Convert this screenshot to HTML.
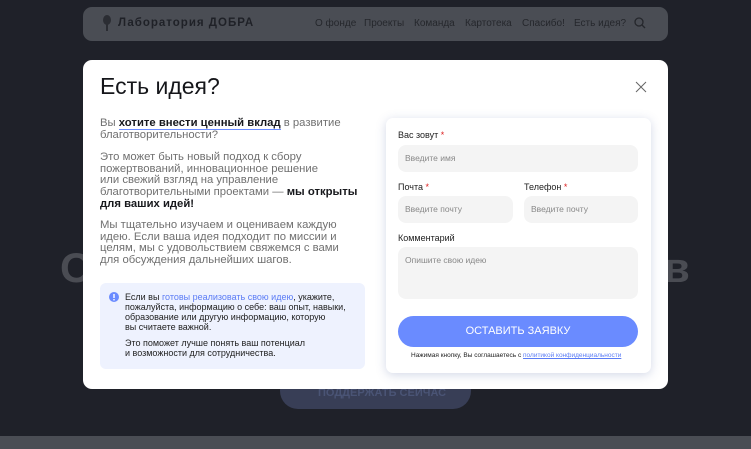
<!DOCTYPE html>
<html><head><meta charset="utf-8"><style>
*{margin:0;padding:0;box-sizing:border-box}
body{width:751px;height:449px;overflow:hidden;background:#1f2129;font-family:"Liberation Sans","Noto Sans CJK SC",sans-serif;position:relative}
.abs{position:absolute}
.hdr{left:83px;top:7px;width:585px;height:34px;background:#4a4d54;border-radius:9px}
.logo{left:118px;top:17px;font-size:11.5px;font-weight:bold;color:#1f2127;letter-spacing:1px}
.nav{top:18px;font-size:10px;color:#25272c}
.big{font-size:42px;font-weight:bold;color:#4a4c53}
.bgbtn{left:280px;top:372px;width:191px;height:37px;background:#383e56;border-radius:18px;color:#4a5475;font-size:11px;padding:15px 0 0 38px;font-weight:bold}
.band{left:0;top:436px;width:751px;height:13px;background:#4a4d54}
.modal{left:83px;top:60px;width:585px;height:329px;background:#fff;border-radius:9px}
h1{position:absolute;left:100px;top:73px;font-size:23px;font-weight:normal;color:#15161a}
.p{position:absolute;left:100px;width:290px;font-size:11.3px;line-height:11.7px;color:#707070;white-space:nowrap}
.p b{color:#17181c}
.info{left:100px;top:283px;width:265px;height:86px;background:#eef2fe;border-radius:6px}
.it{position:absolute;left:125px;font-size:9px;line-height:10px;color:#222;white-space:nowrap}
.card{left:386px;top:118px;width:265px;height:255px;background:#fff;border-radius:7px;box-shadow:0 2px 10px rgba(80,100,160,.25)}
.lb{position:absolute;font-size:9px;color:#222}
.lb i{color:#d22;font-style:normal}
.in{position:absolute;background:#f4f4f4;border-radius:8px;font-size:8.5px;color:#888;padding-left:7px}
.btn{left:398px;top:316px;width:240px;height:31px;background:#6a8bff;border-radius:16px;color:#fff;font-size:11px;text-align:center;line-height:31px}
</style></head><body>
<div class="abs hdr"></div>
<svg class="abs" style="left:102px;top:14px" width="10" height="18" viewBox="0 0 10 18"><ellipse cx="5" cy="6" rx="4" ry="5" fill="#2b2d33"/><rect x="4" y="10" width="2" height="7" fill="#2b2d33"/></svg>
<div class="abs logo">Лаборатория ДОБРА</div>
<div class="abs nav" style="left:315px">О фонде</div>
<div class="abs nav" style="left:364px">Проекты</div>
<div class="abs nav" style="left:414px">Команда</div>
<div class="abs nav" style="left:465px">Картотека</div>
<div class="abs nav" style="left:522px">Спасибо!</div>
<div class="abs nav" style="left:574px">Есть идея?</div>
<svg class="abs" style="left:634px;top:17px" width="12" height="12" viewBox="0 0 12 12"><circle cx="5" cy="5" r="4" stroke="#25272c" stroke-width="1.3" fill="none"/><path d="M8 8l3 3" stroke="#25272c" stroke-width="1.3"/></svg>
<div class="abs big" style="left:60px;top:244px">О</div>
<div class="abs big" style="left:664px;top:244px">в</div>
<div class="abs bgbtn">ПОДДЕРЖАТЬ СЕЙЧАС</div>
<div class="abs band"></div>
<div class="abs modal"></div>
<h1>Есть идея?</h1>
<svg class="abs" style="left:635px;top:81px" width="12" height="12" viewBox="0 0 12 12"><path d="M1 1l10 10M11 1L1 11" stroke="#666" stroke-width="1"/></svg>
<div class="p" style="top:118px">Вы <b style="border-bottom:1.5px solid #6a8bff">хотите внести ценный вклад</b> в развитие<br>благотворительности?</div>
<div class="p" style="top:152px">Это может быть новый подход к сбору<br>пожертвований, инновационное решение<br>или свежий взгляд на управление<br>благотворительными проектами — <b>мы открыты<br>для ваших идей!</b></div>
<div class="p" style="top:220px">Мы тщательно изучаем и оцениваем каждую<br>идею. Если ваша идея подходит по миссии и<br>целям, мы с удовольствием свяжемся с вами<br>для обсуждения дальнейших шагов.</div>
<div class="abs info"></div>
<svg class="abs" style="left:109px;top:292px" width="10" height="10"><circle cx="5" cy="5" r="5" fill="#6a8bff"/><rect x="4.3" y="2" width="1.4" height="4" fill="#fff"/><rect x="4.3" y="7" width="1.4" height="1.4" fill="#fff"/></svg>
<div class="it" style="top:292px">Если вы <span style="color:#5b7cf5">готовы реализовать свою идею</span>, укажите,<br>пожалуйста, информацию о себе: ваш опыт, навыки,<br>образование или другую информацию, которую<br>вы считаете важной.</div>
<div class="it" style="top:338px">Это поможет лучше понять ваш потенциал<br>и возможности для сотрудничества.</div>
<div class="abs card"></div>
<div class="lb" style="left:398px;top:130px">Вас зовут <i>*</i></div>
<div class="in" style="left:398px;top:145px;width:240px;height:27px;line-height:27px">Введите имя</div>
<div class="lb" style="left:398px;top:182px">Почта <i>*</i></div>
<div class="lb" style="left:524px;top:182px">Телефон <i>*</i></div>
<div class="in" style="left:398px;top:196px;width:115px;height:27px;line-height:27px">Введите почту</div>
<div class="in" style="left:524px;top:196px;width:114px;height:27px;line-height:27px">Введите почту</div>
<div class="lb" style="left:398px;top:233px">Комментарий</div>
<div class="in" style="left:398px;top:247px;width:240px;height:52px;padding-top:8px">Опишите свою идею</div>
<div class="abs btn">ОСТАВИТЬ ЗАЯВКУ</div>
<div class="abs" style="left:411px;top:352px;font-size:6.5px;color:#222">Нажимая кнопку, Вы соглашаетесь с <span style="color:#5b7cf5;text-decoration:underline">политикой конфиденциальности</span></div>
</body></html>
